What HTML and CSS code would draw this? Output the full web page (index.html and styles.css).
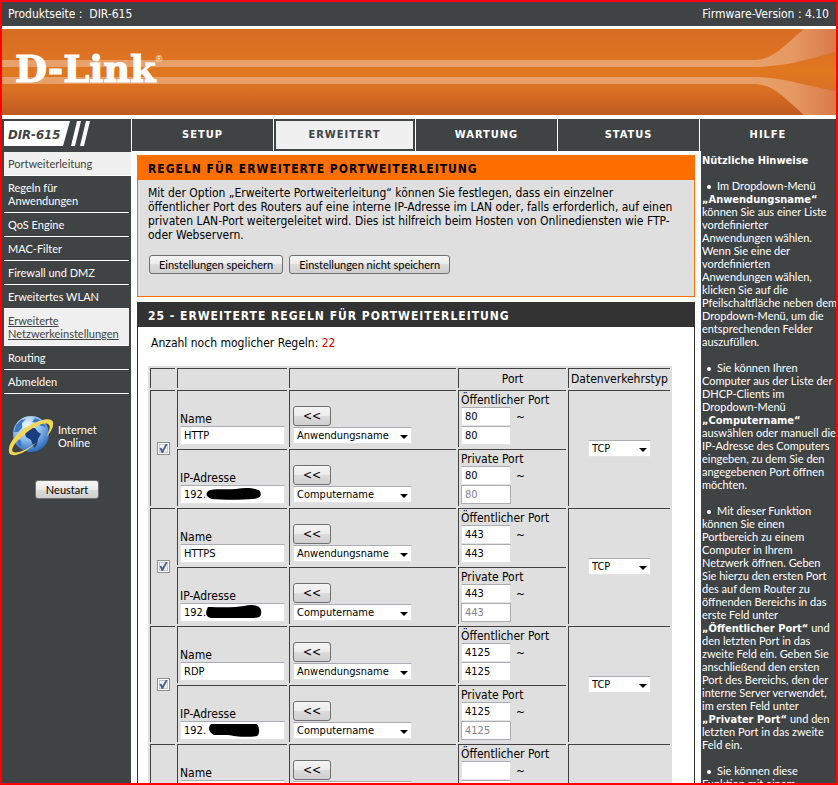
FILE: index.html
```html
<!DOCTYPE html>
<html lang="de">
<head>
    <meta charset="UTF-8">
    <title>D-Link DIR-615</title>
    <link rel="stylesheet" href="styles.css">
</head>
<body>
    <header>
        <div class="topbar">
            <div>Produktseite :&nbsp; <a href="#">DIR-615</a></div>
            <div>Firmware-Version : 4.10</div>
        </div>
        <div class="banner">
            <div class="logo">D-Link<sup>®</sup></div>
            <svg class="flare" width="84" height="86" viewBox="0 0 84 86">
                <defs>
                    <linearGradient id="beam" x1="0" x2="1">
                        <stop offset="0" stop-color="#e8a06a"/>
                        <stop offset=".5" stop-color="#e59862"/>
                        <stop offset="1" stop-color="#d87a48"/>
                    </linearGradient>
                </defs>
                <path d="M0 31C22 31 30 18 52 0H84V23C50 32 30 38 0 38Z"/>
                <path d="M0 48C30 48 50 56 84 62V86H52C30 67 22 55 0 55Z"/>
            </svg>
        </div>
        <nav class="tabs">
            <div class="model">
                <svg width="90" height="29" viewBox="0 0 90 29">
                    <path fill="#fff" d="M2 2H68L61 27H2ZM75 2H79L73 27H69ZM84 2H88L82 27H78Z"/>
                    <text x="6" y="20">DIR-615</text>
                </svg>
            </div>
            <a href="#">SETUP</a>
            <a href="#" class="active">ERWEITERT</a>
            <a href="#">WARTUNG</a>
            <a href="#">STATUS</a>
            <a href="#">HILFE</a>
        </nav>
    </header>

    <div class="content">
        <aside class="sidebar">
            <ul>
                <li class="current"><a href="#">Portweiterleitung</a></li>
                <li><a href="#">Regeln für<br>Anwendungen</a></li>
                <li><a href="#">QoS Engine</a></li>
                <li><a href="#">MAC-Filter</a></li>
                <li><a href="#">Firewall und DMZ</a></li>
                <li><a href="#">Erweitertes WLAN</a></li>
                <li class="hover"><a href="#">Erweiterte<br>Netzwerkeinstellungen</a></li>
                <li><a href="#">Routing</a></li>
                <li><a href="#">Abmelden</a></li>
            </ul>
            <div class="online">
                <svg width="46" height="44" viewBox="0 0 46 44">
                    <defs>
                        <radialGradient id="sea" cx="40%" cy="28%" r="75%">
                            <stop offset="0" stop-color="#f4faff"/>
                            <stop offset=".5" stop-color="#8dbdf0"/>
                            <stop offset="1" stop-color="#2764b8"/>
                        </radialGradient>
                    </defs>
                    <circle cx="23" cy="20" r="18" fill="url(#sea)"/>
                    <path d="M16 17L20 14L27 14L30 18L33 20L30 25L29 31L26 34L23 26L18 23Z" fill="#173f80"/>
                    <path d="M6 18L8 11L13 6L18 5L14 9L14 14L10 18ZM9 24L13 27L14 33L10 31ZM27 4L34 7L38 13L33 12L30 9L24 8Z" fill="#3c78c4"/>
                    <path d="M2 40C-3 33 8 18 22 11C33 5 43 3 45 8C46 13 43 18 38 23C42 16 43 12 40 10C35 8 25 13 17 20C8 27 2 35 5 38C10 40 20 35 29 28C20 37 7 44 2 40Z" fill="#f1d658"/>
                </svg>
                <div>Internet<br>Online</div>
            </div>
            <button type="button" class="restart">Neustart</button>
        </aside>

        <main>
            <section class="box intro">
                <h2>REGELN FÜR ERWEITERTE PORTWEITERLEITUNG</h2>
                <p>Mit der Option „Erweiterte Portweiterleitung“ können Sie festlegen, dass ein einzelner<br>
                öffentlicher Port des Routers auf eine interne IP-Adresse im LAN oder, falls erforderlich, auf einen<br>
                privaten LAN-Port weitergeleitet wird. Dies ist hilfreich beim Hosten von Onlinediensten wie FTP-<br>
                oder Webservern.</p>
                <div class="actions">
                    <button type="button">Einstellungen speichern</button>
                    <button type="button">Einstellungen nicht speichern</button>
                </div>
            </section>

            <section class="box rules">
                <h2>25 - ERWEITERTE REGELN FÜR PORTWEITERLEITUNG</h2>
                <p>Anzahl noch moglicher Regeln: <span class="count">22</span></p>
                <table>
                    <colgroup>
                        <col class="c-check"><col class="c-name"><col class="c-pick"><col class="c-port"><col>
                    </colgroup>
                    <tr class="head">
                        <td></td><td></td><td></td><th>Port</th><th>Datenverkehrstyp</th>
                    </tr>

                    <!-- HTTP -->
                    <tr>
                        <td rowspan="2" class="mid"><input type="checkbox" aria-label="Regel 1 aktiv" checked></td>
                        <td><label for="name1">Name</label><input type="text" id="name1" value="HTTP"></td>
                        <td><button type="button" class="copy">&lt;&lt;</button><span class="drop"><select aria-label="Anwendung 1"><option>Anwendungsname</option></select></span></td>
                        <td class="port"><label for="pub1">Öffentlicher Port</label><input type="text" id="pub1" value="80"><span>~</span><input type="text" aria-label="bis" value="80"></td>
                        <td rowspan="2" class="mid"><span class="drop small"><select aria-label="Typ 1"><option>TCP</option></select></span></td>
                    </tr>
                    <tr>
                        <td><label for="ip1">IP-Adresse</label><span class="ip"><input type="text" id="ip1" value="192."><svg width="56" height="14" viewBox="0 0 56 14"><path d="M2 4C8 1 20 3 30 2C40 0 50 1 54 4C56 9 54 11 47 12C36 13 16 13 6 12C-1 10 0 7 2 4Z"/></svg></span></td>
                        <td><button type="button" class="copy">&lt;&lt;</button><span class="drop"><select aria-label="Computer 1"><option>Computername</option></select></span></td>
                        <td class="port"><label for="priv1">Private Port</label><input type="text" id="priv1" value="80"><span>~</span><input type="text" aria-label="bis" value="80" disabled></td>
                    </tr>

                    <!-- HTTPS -->
                    <tr>
                        <td rowspan="2" class="mid"><input type="checkbox" aria-label="Regel 2 aktiv" checked></td>
                        <td><label for="name2">Name</label><input type="text" id="name2" value="HTTPS"></td>
                        <td><button type="button" class="copy">&lt;&lt;</button><span class="drop"><select aria-label="Anwendung 2"><option>Anwendungsname</option></select></span></td>
                        <td class="port"><label for="pub2">Öffentlicher Port</label><input type="text" id="pub2" value="443"><span>~</span><input type="text" aria-label="bis" value="443"></td>
                        <td rowspan="2" class="mid"><span class="drop small"><select aria-label="Typ 2"><option>TCP</option></select></span></td>
                    </tr>
                    <tr>
                        <td><label for="ip2">IP-Adresse</label><span class="ip"><input type="text" id="ip2" value="192."><svg width="56" height="14" viewBox="0 0 56 14"><path d="M2 2C10 2 28 3 38 1C46-1 54 0 55 5C56 11 54 13 48 13L5 13C-2 11 0 6 2 2Z"/></svg></span></td>
                        <td><button type="button" class="copy">&lt;&lt;</button><span class="drop"><select aria-label="Computer 2"><option>Computername</option></select></span></td>
                        <td class="port"><label for="priv2">Private Port</label><input type="text" id="priv2" value="443"><span>~</span><input type="text" aria-label="bis" value="443" disabled></td>
                    </tr>

                    <!-- RDP -->
                    <tr>
                        <td rowspan="2" class="mid"><input type="checkbox" aria-label="Regel 3 aktiv" checked></td>
                        <td><label for="name3">Name</label><input type="text" id="name3" value="RDP"></td>
                        <td><button type="button" class="copy">&lt;&lt;</button><span class="drop"><select aria-label="Anwendung 3"><option>Anwendungsname</option></select></span></td>
                        <td class="port"><label for="pub3">Öffentlicher Port</label><input type="text" id="pub3" value="4125"><span>~</span><input type="text" aria-label="bis" value="4125"></td>
                        <td rowspan="2" class="mid"><span class="drop small"><select aria-label="Typ 3"><option>TCP</option></select></span></td>
                    </tr>
                    <tr>
                        <td><label for="ip3">IP-Adresse</label><span class="ip"><input type="text" id="ip3" value="192."><svg width="56" height="14" viewBox="0 0 56 14"><path d="M5 1L50 1C54 2 54 12 51 13C40 15 28 13 22 12L8 12C2 9 2 4 5 1Z"/></svg></span></td>
                        <td><button type="button" class="copy">&lt;&lt;</button><span class="drop"><select aria-label="Computer 3"><option>Computername</option></select></span></td>
                        <td class="port"><label for="priv3">Private Port</label><input type="text" id="priv3" value="4125"><span>~</span><input type="text" aria-label="bis" value="4125" disabled></td>
                    </tr>

                    <tr>
                        <td class="mid"></td>
                        <td><label for="name4">Name</label><input type="text" id="name4"></td>
                        <td><button type="button" class="copy">&lt;&lt;</button><span class="drop"><select aria-label="Anwendung 4"></select></span></td>
                        <td class="port"><label for="pub4">Öffentlicher Port</label><input type="text" id="pub4"><span>~</span><input type="text" aria-label="bis"></td>
                        <td class="mid"></td>
                    </tr>
                </table>
            </section>
        </main>

        <aside class="help">
            <b>Nützliche Hinweise</b>
            <p><i></i>Im Dropdown-Menü<br>
            <b>„Anwendungsname“</b><br>
            können Sie aus einer Liste<br>
            vordefinierter<br>
            Anwendungen wählen.<br>
            Wenn Sie eine der<br>
            vordefinierten<br>
            Anwendungen wählen,<br>
            klicken Sie auf die<br>
            Pfeilschaltfläche neben dem<br>
            Dropdown-Menü, um die<br>
            entsprechenden Felder<br>
            auszufüllen.</p>
            <p><i></i>Sie können Ihren<br>
            Computer aus der Liste der<br>
            DHCP-Clients im<br>
            Dropdown-Menü<br>
            <b>„Computername“</b><br>
            auswählen oder manuell die<br>
            IP-Adresse des Computers<br>
            eingeben, zu dem Sie den<br>
            angegebenen Port öffnen<br>
            möchten.</p>
            <p><i></i>Mit dieser Funktion<br>
            können Sie einen<br>
            Portbereich zu einem<br>
            Computer in Ihrem<br>
            Netzwerk öffnen. Geben<br>
            Sie hierzu den ersten Port<br>
            des auf dem Router zu<br>
            öffnenden Bereichs in das<br>
            erste Feld unter<br>
            <b>„Öffentlicher Port“</b> und<br>
            den letzten Port in das<br>
            zweite Feld ein. Geben Sie<br>
            anschließend den ersten<br>
            Port des Bereichs, den der<br>
            interne Server verwendet,<br>
            im ersten Feld unter<br>
            <b>„Privater Port“</b> und den<br>
            letzten Port in das zweite<br>
            Feld ein.</p>
            <p><i></i>Sie können diese<br>
            Funktion mit einem</p>
        </aside>
    </div>
</body>
</html>
```
FILE: styles.css
```css
* {
    box-sizing: border-box;
}

body {
    margin: 0;
    height: 100vh;
    overflow: hidden;
    border: 2px solid #f00;
    background-color: #fff;
    color: #000;
    font-family: Tahoma, "DejaVu Sans Condensed", "DejaVu Sans", sans-serif;
    font-size: 12px;
    line-height: 14px;
    display: flex;
    flex-direction: column;
}

a {
    color: inherit;
    text-decoration: none;
}

/* header */
header {
    flex: none;
}

.topbar {
    display: flex;
    justify-content: space-between;
    padding: 5px 7px 5px 6px;
    background-color: #404343;
    color: #fff;
}

.banner {
    position: relative;
    display: flex;
    justify-content: space-between;
    height: 86px;
    margin: 3px 0 4px;
    background: linear-gradient(#d86c23, #de7322 35%, #e07820 50%, #d96f24 72%, #bf5a22);
}

.banner::before {
    content: "";
    position: absolute;
    top: 31px;
    left: 0;
    right: 84px;
    height: 10px;
    border: solid #e8a06a;
    border-width: 7px 0;
}

.logo {
    position: relative;
    padding: 20px 0 0 13px;
    color: #fff;
    font-family: "DejaVu Serif", serif;
    font-size: 37px;
    font-weight: bold;
    line-height: 40px;
    -webkit-text-stroke: 1px #fff;
}

.logo sup {
    font-family: "Liberation Sans", sans-serif;
    font-size: 9px;
    font-weight: normal;
    line-height: 9px;
    vertical-align: 20px;
    -webkit-text-stroke: 0;
}

.flare path {
    fill: url(#beam);
}

.tabs {
    display: grid;
    grid-template-columns: 129px repeat(4, 1fr) 136px;
    gap: 1px;
    height: 29px;
    margin-bottom: 2px;
}

.tabs a,
.model {
    background-color: #404343;
}

.tabs a {
    display: flex;
    align-items: center;
    justify-content: center;
    color: #fff;
    font-size: 11px;
    font-weight: bold;
    letter-spacing: 1px;
}

.tabs a.active {
    background-color: #f0f0f0;
    border: 2px solid #404343;
    color: #404343;
}

.model text {
    fill: #404343;
    font-family: "DejaVu Sans Condensed", sans-serif;
    font-size: 13px;
    font-weight: bold;
    font-style: italic;
}

/* columns */
.content {
    flex: 1;
    min-height: 0;
    display: grid;
    grid-template-columns: 129px 1fr 135px;
}

.sidebar,
.help {
    background-color: #404343;
    color: #fff;
    font-family: Tahoma, Lato, sans-serif;
    font-size: 11px;
    line-height: 13px;
}

.sidebar {
    padding: 2px 0 0 2px;
}

.sidebar ul {
    list-style: none;
    margin: 0 2px 0 0;
    padding: 0;
}

.sidebar li {
    padding: 5px 4px;
    border-bottom: 1px solid #fff;
}

.sidebar .current,
.sidebar .hover {
    background-color: #f0f0f0;
    color: #404343;
}

.sidebar .current {
    margin-right: -2px;
}

.sidebar .hover a {
    text-decoration: underline;
}

.online {
    display: flex;
    align-items: center;
    gap: 4px;
    margin: 20px 0 22px 4px;
}

button {
    height: 19px;
    padding: 0 9px;
    border: 1px solid #707070;
    border-radius: 3px;
    background: linear-gradient(#f4f4f4, #ebebeb 50%, #dcdcdc 50%, #cfcfcf);
    color: #000;
    font-family: Tahoma, Lato, sans-serif;
    font-size: 11px;
    line-height: 13px;
    white-space: nowrap;
}

.restart {
    display: block;
    width: 64px;
    margin-left: 31px;
}

main {
    padding: 5px 6px 0;
    overflow: hidden;
}

.box {
    border: 1px solid #333;
    margin-bottom: 5px;
}

.box h2 {
    margin: 0;
    padding: 6px 10px 4px;
    background-color: #333;
    color: #fff;
    font-size: 12px;
    line-height: 14px;
    letter-spacing: 1px;
}

.box p {
    margin: 0;
    white-space: nowrap;
}

.intro {
    border-color: #ff6f00;
    background-color: #dfdfdf;
}

.intro h2 {
    background-color: #ff6f00;
    color: #000;
}

.intro p {
    padding: 6px 10px 0;
}

.actions {
    display: flex;
    gap: 6px;
    padding: 13px 11px 22px;
}

.rules p {
    padding: 9px 13px 16px;
}

.count {
    color: #d00000;
}

/* rule table */
table {
    margin: 0 23px 0 10px;
    width: 524px;
    table-layout: fixed;
    border-collapse: separate;
    border-spacing: 2px;
    background-color: #dfdfdf;
}

.c-check {
    width: 25px;
}

.c-name {
    width: 110px;
}

.c-pick {
    width: 167px;
}

.c-port {
    width: 108px;
}

td,
th {
    height: 57px;
    padding: 2px;
    border: solid #404040;
    border-width: 1px 0 0 1px;
    vertical-align: bottom;
    text-align: left;
    font-weight: normal;
}

.head td,
.head th {
    height: 20px;
    text-align: center;
    vertical-align: middle;
    white-space: nowrap;
    padding: 0;
}

td label {
    display: block;
}

td.mid {
    vertical-align: middle;
    text-align: center;
}

input[type="text"] {
    display: block;
    width: 105px;
    height: 19px;
    padding: 0 3px;
    border: 1px solid #e3e3e3;
    border-top-color: #abadb3;
    background-color: #fff;
    color: #000;
    font-family: inherit;
    font-size: 11px;
}

input[type="text"]:disabled {
    border-color: #abadb3;
    color: #838383;
}

.port input[type="text"] {
    display: inline-block;
    width: 50px;
    vertical-align: top;
}

.port span {
    display: inline-block;
    width: 50px;
    height: 19px;
    padding: 3px 0 0 5px;
    vertical-align: top;
}

.ip {
    display: block;
    position: relative;
}

.ip svg {
    position: absolute;
    left: 26px;
    top: 2px;
}

.copy {
    display: block;
    width: 38px;
    height: 20px;
    padding: 0;
    margin: 0 0 1px 1px;
    font-family: inherit;
    font-size: 12px;
}

.drop {
    display: block;
    position: relative;
    width: 119px;
    margin: 0 0 1px 1px;
}

.drop.small {
    width: 63px;
    margin: 0 auto;
}

.drop::after {
    content: "";
    position: absolute;
    right: 4px;
    top: 8px;
    border: solid transparent;
    border-width: 4px 4px 0;
    border-top-color: #000;
}

select {
    display: block;
    appearance: none;
    width: 100%;
    height: 17px;
    padding: 0 3px;
    border: 1px solid #e3e3e3;
    border-top-color: #abadb3;
    border-radius: 0;
    background-color: #fff;
    color: #000;
    font-family: inherit;
    font-size: 11px;
}

input[type="checkbox"] {
    appearance: none;
    display: block;
    width: 13px;
    height: 13px;
    margin: 0 auto;
    border: 1px solid #8e8f8f;
    background-color: #f4f4f4;
    box-shadow: inset 0 0 0 1px #fff, inset 0 0 0 2px #c5cad0;
}

input[type="checkbox"]:checked::before {
    content: "";
    display: block;
    width: 11px;
    height: 11px;
    background-color: #4b5f97;
    clip-path: polygon(18% 48%, 34% 42%, 45% 62%, 74% 8%, 92% 8%, 50% 92%, 38% 92%);
}

/* help column */
.help {
    padding: 3px 0 0 1px;
    white-space: nowrap;
    overflow: hidden;
}

/* keeps the bold font from making its line taller */
.help b {
    font-family: Tahoma, "DejaVu Sans Condensed", sans-serif;
    line-height: 9px;
}

.help p {
    margin: 13px 0 0;
}

.help i {
    display: inline-block;
    width: 4px;
    height: 4px;
    margin: 0 6px 1px 5px;
    border-radius: 50%;
    background-color: #fff;
}
```
